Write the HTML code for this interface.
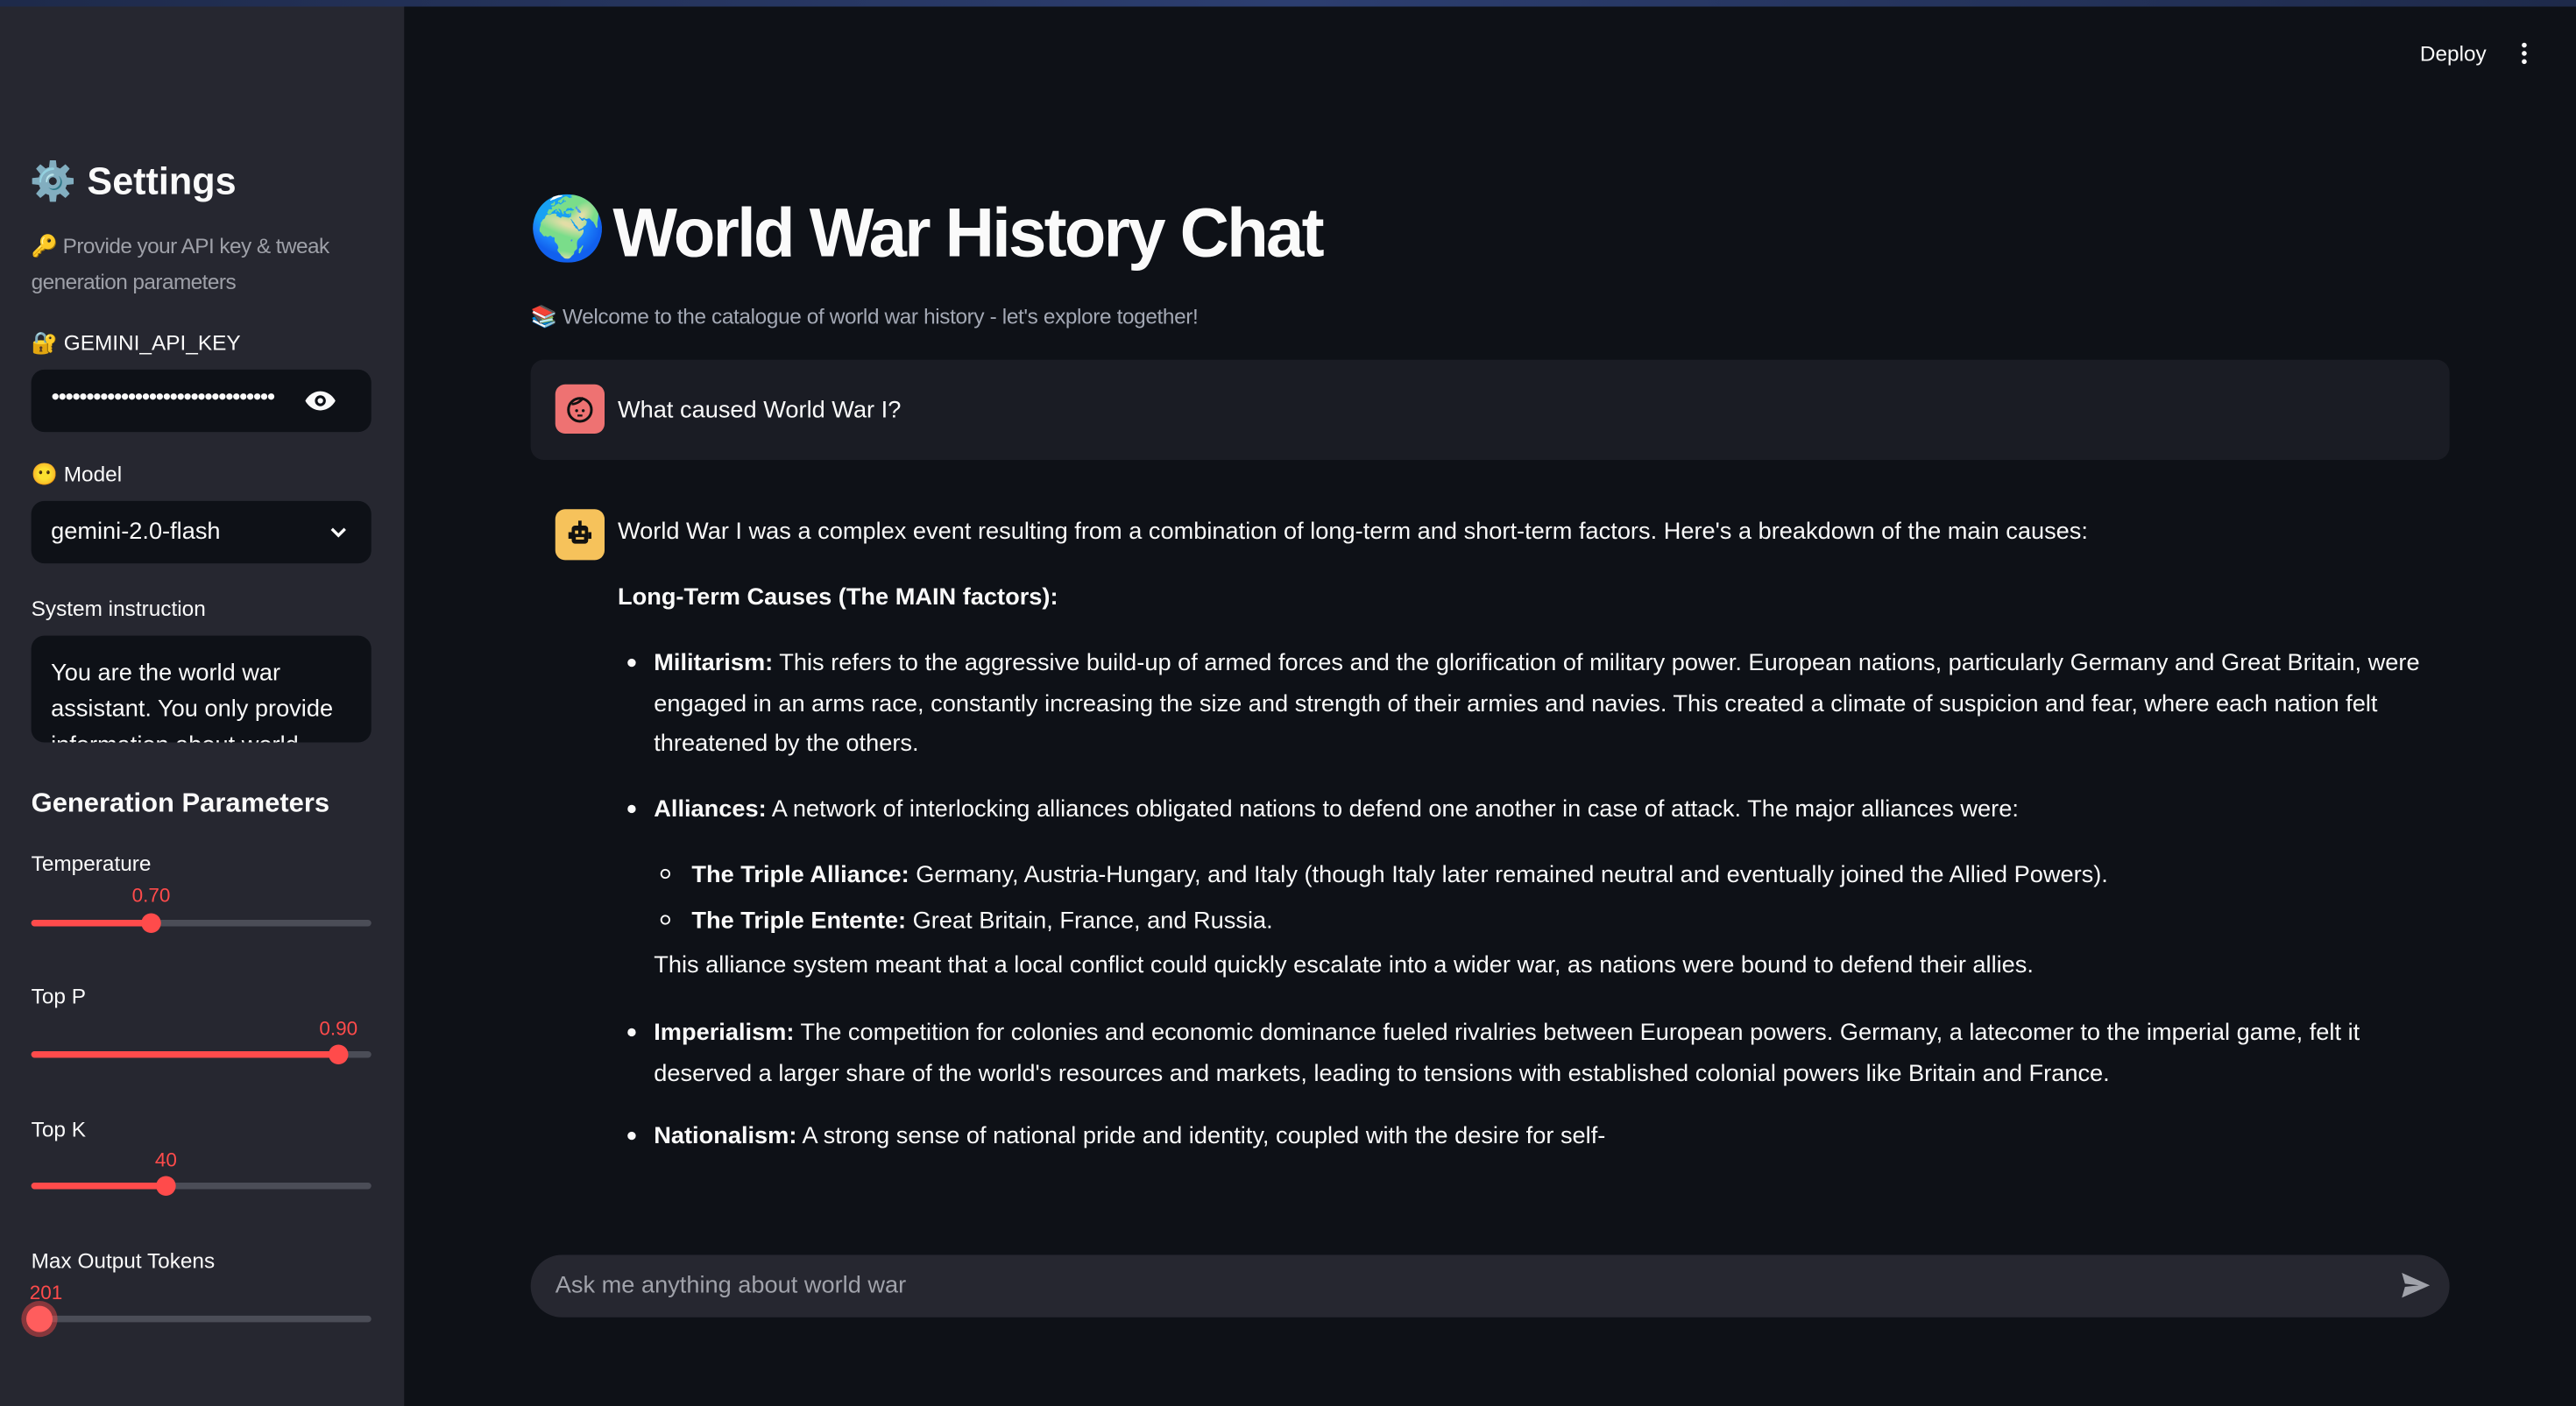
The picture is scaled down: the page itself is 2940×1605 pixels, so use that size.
<!DOCTYPE html>
<html><head><meta charset="utf-8">
<style>
html,body{margin:0;padding:0;background:#0e1117;overflow:hidden;width:2940px;height:1605px}
#w{position:absolute;left:0;top:0;width:1568px;height:856px;transform:scale(1.875);transform-origin:0 0;font-family:"Liberation Sans","Noto Sans CJK SC",sans-serif;color:#fafafa}
.a{position:absolute;white-space:nowrap}
#side{position:absolute;left:0;top:0;width:246px;height:856px;background:#262730}
#top{position:absolute;left:0;top:0;width:1568px;height:4px;background:linear-gradient(90deg,#1e2a4a,#2c3e70,#1e2a4a)}
.lbl{font-size:13px;line-height:16px;color:#fafafa}
.cap{font-size:13px;line-height:22px;color:#9ea0a8}
.box{position:absolute;left:19px;width:207px;background:#0e1117;border-radius:8px}
.track{position:absolute;left:19px;width:207px;height:4px;border-radius:2px;background:#4b4d57}
.fill{position:absolute;left:19px;height:4px;border-radius:2px;background:#ff4b4b}
.th{position:absolute;width:12px;height:12px;border-radius:50%;background:#ff4b4b}
.val{position:absolute;font-size:12px;line-height:14px;color:#ff4b4b;transform:translateX(-50%)}
.t{font-size:14.5px;line-height:20px;letter-spacing:0}
.dot{position:absolute;width:5px;height:5px;border-radius:50%;background:#fafafa}
.circ{position:absolute;border-radius:50%;border:1px solid #fafafa;box-sizing:border-box;width:6px;height:6px}
b{font-weight:bold}
</style></head><body><div id="w">
<div id="side"></div>
<div id="top"></div>

<div class="a" style="left:18px;top:96px;font-size:23px;line-height:28px;font-weight:bold">⚙️ Settings</div>
<div class="a cap" style="left:19px;top:139px;letter-spacing:-0.3px">🔑 Provide your API key &amp; tweak</div>
<div class="a cap" style="left:19px;top:161px;letter-spacing:-0.3px">generation parameters</div>
<div class="a lbl" style="left:19px;top:201px">🔐 GEMINI_API_KEY</div>
<div class="box" style="top:225px;height:38px"></div>
<div class="a" style="left:31px;top:236px;font-size:9px;letter-spacing:-1.2px;color:#fafafa">●●●●●●●●●●●●●●●●●●●●●●●●●●●●●●●●</div>
<svg class="a" style="left:185px;top:236px" width="20" height="16" viewBox="0 0 24 16"><path d="M12 1C6.5 1 2.5 5 1 8c1.5 3 5.5 7 11 7s9.5-4 11-7c-1.5-3-5.5-7-11-7z" fill="#fafafa"/><circle cx="12" cy="8" r="4" fill="#0e1117"/><circle cx="12" cy="8" r="2" fill="#fafafa"/></svg>
<div class="a lbl" style="left:19px;top:281px">😶 Model</div>
<div class="box" style="top:305px;height:38px"></div>
<div class="a" style="left:31px;top:315px;font-size:14.5px;line-height:19px">gemini-2.0-flash</div>
<svg class="a" style="left:200px;top:319px" width="12" height="10" viewBox="0 0 12 10"><path d="M2 3l4 4 4-4" stroke="#fafafa" stroke-width="1.8" fill="none"/></svg>
<div class="a lbl" style="left:19px;top:363px">System instruction</div>
<div class="box" style="top:387px;height:65px;overflow:hidden">
<div style="position:absolute;left:12px;top:12px;font-size:14.5px;line-height:22px;white-space:nowrap">You are the world war<br>assistant. You only provide<br>information about world</div></div>
<div class="a" style="left:19px;top:479px;font-size:16.5px;line-height:20px;font-weight:bold">Generation Parameters</div>

<div class="a lbl" style="left:19px;top:518px">Temperature</div>
<div class="val" style="left:92px;top:538px">0.70</div>
<div class="track" style="top:560px"></div><div class="fill" style="top:560px;width:73px"></div><div class="th" style="left:86px;top:556px"></div>

<div class="a lbl" style="left:19px;top:599px">Top P</div>
<div class="val" style="left:206px;top:619px">0.90</div>
<div class="track" style="top:640px"></div><div class="fill" style="top:640px;width:187px"></div><div class="th" style="left:200px;top:636px"></div>

<div class="a lbl" style="left:19px;top:680px">Top K</div>
<div class="val" style="left:101px;top:699px">40</div>
<div class="track" style="top:720px"></div><div class="fill" style="top:720px;width:82px"></div><div class="th" style="left:95px;top:716px"></div>

<div class="a lbl" style="left:19px;top:760px">Max Output Tokens</div>
<div class="val" style="left:28px;top:780px">201</div>
<div class="track" style="top:801px"></div>
<div class="th" style="left:16px;top:795px;width:16px;height:16px;background:#ff5d5d;box-shadow:0 0 0 3px rgba(255,75,75,0.45)"></div>

<div class="a" style="left:1473px;top:25px;font-size:13px;line-height:16px">Deploy</div>
<div class="a" style="left:1535px;top:26px;width:3px">
<div style="width:3px;height:3px;border-radius:50%;background:#fafafa;margin-bottom:2px"></div><div style="width:3px;height:3px;border-radius:50%;background:#fafafa;margin-bottom:2px"></div><div style="width:3px;height:3px;border-radius:50%;background:#fafafa"></div></div>

<div class="a" style="left:322px;top:118px;font-size:38px;line-height:44px">🌍</div>
<div class="a" style="left:373px;top:117px;font-size:42px;line-height:50px;font-weight:bold;letter-spacing:-1.5px;transform:scaleX(0.99);transform-origin:0 0">World War History Chat</div>
<div class="a" style="left:323px;top:184px;font-size:13px;line-height:17px;color:#a3a8b4;letter-spacing:-0.2px">📚 Welcome to the catalogue of world war history - let's explore together!</div>

<div class="a" style="left:323px;top:219px;width:1168px;height:61px;background:#1a1c24;border-radius:8px"></div>
<div class="a" style="left:338px;top:234px;width:30px;height:30px;background:#ee7272;border-radius:6px"></div>
<svg class="a" style="left:344px;top:240px" width="18" height="18" viewBox="0 0 18 18"><circle cx="9" cy="9.5" r="7" fill="none" stroke="#111" stroke-width="1.6"/><path d="M4 6c3 0 6-2 7-4" stroke="#111" stroke-width="1.5" fill="none"/><circle cx="7" cy="10" r="0.9" fill="#111"/><circle cx="11" cy="10" r="0.9" fill="#111"/><path d="M7.5 13h3" stroke="#111" stroke-width="1.2"/></svg>
<div class="a t" style="left:376px;top:240px">What caused World War I?</div>

<div class="a" style="left:338px;top:310px;width:30px;height:31px;background:#f6c25b;border-radius:6px"></div>
<svg class="a" style="left:344px;top:316px" width="18" height="18" viewBox="0 0 18 18"><rect x="8" y="1" width="2" height="3" fill="#111"/><rect x="4" y="4" width="10" height="11" rx="2" fill="#111"/><rect x="2" y="8" width="2" height="4" fill="#111"/><rect x="14" y="8" width="2" height="4" fill="#111"/><rect x="6" y="7" width="2" height="2" fill="#f6c25b"/><rect x="10" y="7" width="2" height="2" fill="#f6c25b"/><rect x="6.5" y="11" width="5" height="1.5" fill="#f6c25b"/></svg>

<div class="a t" style="left:376px;top:314px">World War I was a complex event resulting from a combination of long-term and short-term factors. Here's a breakdown of the main causes:</div>
<div class="a t" style="left:376px;top:354px"><b>Long-Term Causes (The MAIN factors):</b></div>

<div class="dot" style="left:382px;top:401px"></div>
<div class="a t" style="left:398px;top:392px;line-height:24.5px"><b>Militarism:</b> This refers to the aggressive build-up of armed forces and the glorification of military power. European nations, particularly Germany and Great Britain, were<br>engaged in an arms race, constantly increasing the size and strength of their armies and navies. This created a climate of suspicion and fear, where each nation felt<br>threatened by the others.</div>

<div class="dot" style="left:382px;top:490px"></div>
<div class="a t" style="left:398px;top:483px"><b>Alliances:</b> A network of interlocking alliances obligated nations to defend one another in case of attack. The major alliances were:</div>
<div class="circ" style="left:402px;top:529px"></div>
<div class="a t" style="left:421px;top:523px"><b>The Triple Alliance:</b> Germany, Austria-Hungary, and Italy (though Italy later remained neutral and eventually joined the Allied Powers).</div>
<div class="circ" style="left:402px;top:557px"></div>
<div class="a t" style="left:421px;top:551px"><b>The Triple Entente:</b> Great Britain, France, and Russia.</div>
<div class="a t" style="left:398px;top:578px">This alliance system meant that a local conflict could quickly escalate into a wider war, as nations were bound to defend their allies.</div>

<div class="dot" style="left:382px;top:626px"></div>
<div class="a t" style="left:398px;top:617px;line-height:24.5px"><b>Imperialism:</b> The competition for colonies and economic dominance fueled rivalries between European powers. Germany, a latecomer to the imperial game, felt it<br>deserved a larger share of the world's resources and markets, leading to tensions with established colonial powers like Britain and France.</div>

<div class="dot" style="left:382px;top:689px"></div>
<div class="a t" style="left:398px;top:682px"><b>Nationalism:</b> A strong sense of national pride and identity, coupled with the desire for self-</div>

<div class="a" style="left:323px;top:764px;width:1168px;height:38px;background:#262730;border-radius:19px"></div>
<div class="a t" style="left:338px;top:773px;color:#a0a2aa">Ask me anything about world war</div>
<svg class="a" style="left:1461px;top:774px" width="19" height="17" viewBox="0 0 20 18"><path d="M1 1l18 8-18 8 2-7 9-1-9-1z" fill="#a0a2aa"/></svg>
</div></body></html>
